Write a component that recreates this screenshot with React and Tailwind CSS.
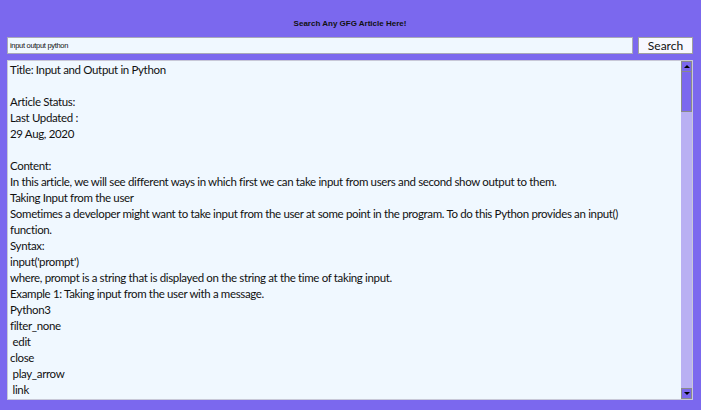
export default function App() {
  const lines = [
    'Title: Input and Output in Python',
    '',
    'Article Status:',
    'Last Updated :',
    '29 Aug, 2020',
    '',
    'Content:',
    'In this article, we will see different ways in which first we can take input from users and second show output to them.',
    'Taking Input from the user',
    'Sometimes a developer might want to take input from the user at some point in the program. To do this Python provides an input()',
    'function.',
    'Syntax:',
    "input('prompt')",
    'where, prompt is a string that is displayed on the string at the time of taking input.',
    'Example 1: Taking input from the user with a message.',
    'Python3',
    'filter_none',
    ' edit',
    'close',
    ' play_arrow',
    ' link',
  ]

  return (
    <div className="w-[701px] h-[410px] bg-[#7b68ee] flex flex-col pl-[7px] pr-[8px] overflow-hidden">
      {/* Heading */}
      <div className="h-[37px] flex items-center justify-center pt-[10px]">
        <span className="text-[8px] font-bold text-[#111] font-['Liberation_Sans',Arial,sans-serif]">
          Search Any GFG Article Here!
        </span>
      </div>

      {/* Search row */}
      <div className="flex h-[17px] gap-[5px]">
        <div className="flex-1 bg-[#f0f8ff] border border-[#a9a9b8] flex items-center px-[2px]">
          <span className="text-[7.5px] text-[#111] font-['Liberation_Sans',Arial,sans-serif] tracking-[-0.3px]">
            input output python
          </span>
        </div>
        <button className="w-[55px] bg-[#f8f8ff] border border-[#a0a0a0] flex items-center justify-center text-[12px] text-[#111] font-['Lato',sans-serif] leading-none">
          Search
        </button>
      </div>

      {/* Text area */}
      <div className="mt-[6px] h-[340px] flex border border-[#c8c8d8]">
        <div className="flex-1 bg-[#f0f8ff] pt-[1px] pl-[2px] overflow-hidden">
          {lines.map((l, i) => (
            <div
              key={i}
              className="h-[16px] leading-[16px] text-[11.5px] tracking-[-0.35px] text-[#111] whitespace-pre font-['Lato',sans-serif]"
            >
              {l}
            </div>
          ))}
        </div>
        <div className="w-[11px] bg-[#b9b0f3] flex flex-col">
          <div className="h-[11px] bg-[#7b68ee] border border-[#8a8a8a] flex items-center justify-center">
            <div className="w-0 h-0 border-l-[3px] border-r-[3px] border-b-[3px] border-l-transparent border-r-transparent border-b-black" />
          </div>
          <div className="h-[40px] bg-[#7b68ee] border border-[#8a8a8a] border-t-0" />
          <div className="flex-1" />
          <div className="h-[11px] bg-[#7b68ee] border border-[#8a8a8a] flex items-center justify-center">
            <div className="w-0 h-0 border-l-[3px] border-r-[3px] border-t-[3px] border-l-transparent border-r-transparent border-t-black" />
          </div>
        </div>
      </div>
    </div>
  )
}
